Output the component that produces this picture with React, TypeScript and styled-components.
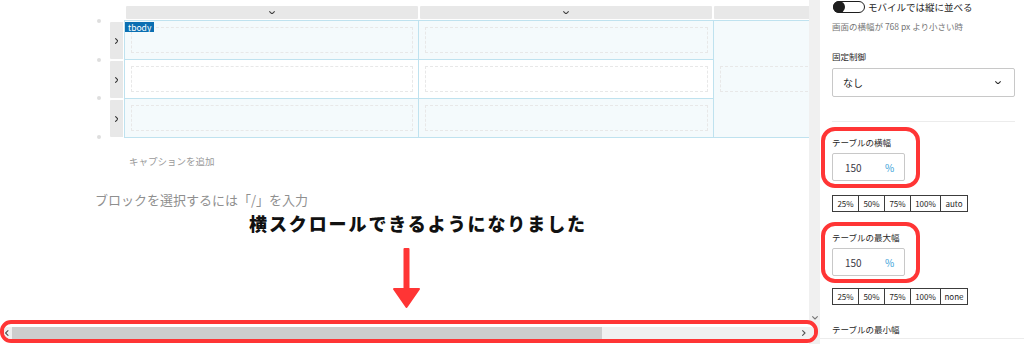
import React from 'react'
import styled, { createGlobalStyle } from 'styled-components'

const GlobalStyle = createGlobalStyle`
  html, body {
    margin: 0;
    padding: 0;
    background: #fff;
  }
  body {
    width: 1024px;
    height: 344px;
    overflow: hidden;
    font-family: "Noto Sans CJK JP", "Noto Sans", sans-serif;
    color: #1e1e1e;
  }
`

const Page = styled.div`
  display: flex;
  width: 1024px;
  height: 344px;
  overflow: hidden;
`

// 左側: エディタ + スクロールバー
const Main = styled.div`
  flex: none;
  width: 820px;
  display: grid;
  grid-template-columns: 809px 11px;
  grid-template-rows: 320px 24px;
`

const Editor = styled.div`
  grid-column: 1;
  grid-row: 1;
  overflow: hidden;
  padding-top: 6px;
  display: flex;
  flex-direction: column;
`

const VScroll = styled.div`
  grid-column: 2;
  grid-row: 1 / span 2;
  background: #f0f0f0;
  display: flex;
  flex-direction: column;
  justify-content: flex-end;
  align-items: center;
  padding-bottom: 24px;
`

const TableBlock = styled.div`
  display: flex;
  align-items: flex-start;
  padding-left: 97px;
`

const DotColumn = styled.div`
  width: 4px;
  height: 120px;
  margin-top: 13px;
  display: flex;
  flex-direction: column;
  justify-content: space-between;
  align-items: center;
`

const Dot = styled.span`
  width: 4px;
  height: 4px;
  border-radius: 50%;
  background: #dedede;
`

const TableWrap = styled.div`
  margin-left: 9px;
  display: flex;
  flex-direction: column;
  gap: 1px;
`

const HeaderRow = styled.div`
  display: flex;
  gap: 2px;
  height: 13px;
  padding-left: 16px;
`

const HeaderBar = styled.div<{ $w: number }>`
  flex: none;
  width: ${p => p.$w}px;
  background: #e8e8e8;
  border-radius: 1px;
  display: flex;
  align-items: center;
  justify-content: center;
`

const BodyRow = styled.div`
  display: flex;
  gap: 1px;
  align-items: flex-start;
`

const HandleColumn = styled.div`
  width: 13px;
  flex: none;
  display: flex;
  flex-direction: column;
  gap: 2px;
  padding-top: 2px;
`

const Handle = styled.div`
  height: 37px;
  background: #e8e8e8;
  border-radius: 1px 0 0 1px;
  display: flex;
  align-items: center;
  justify-content: center;
`

const Grid = styled.div`
  position: relative;
  flex: none;
  display: grid;
  grid-template-columns: 294px 295px 300px;
  grid-template-rows: repeat(3, 39px);
  border-top: 1px solid #bfe2ef;
  border-left: 1px solid #bfe2ef;
`

const Cell = styled.div<{ $fill?: boolean }>`
  box-sizing: border-box;
  border-right: 1px solid #bfe2ef;
  border-bottom: 1px solid #bfe2ef;
  background: ${p => (p.$fill ? '#f4fafc' : '#fff')};
  display: flex;
  align-items: center;
  padding: 0 5px 0 6px;
`

const MergedCell = styled(Cell)`
  grid-column: 3;
  grid-row: 1 / span 3;
`

const Field = styled.div`
  flex: 1;
  height: 26px;
  box-sizing: border-box;
  border: 1px dashed #e8e8e8;
`

const Badge = styled.span`
  position: absolute;
  top: 1px;
  left: 0;
  height: 10px;
  padding: 0 3px;
  background: #0a6fb2;
  color: #fff;
  font-size: 8.5px;
  line-height: 10px;
`

const Caption = styled.div`
  margin-top: 15px;
  padding-left: 129px;
  font-size: 9.5px;
  line-height: 14px;
  color: #9a9a9a;
`

const Placeholder = styled.div`
  margin-top: 23px;
  padding-left: 95px;
  font-size: 13px;
  line-height: 18px;
  color: #8f8f8f;
`

const Notice = styled.div`
  margin-top: 3px;
  padding-left: 249px;
  font-size: 18px;
  line-height: 22px;
  font-weight: 900;
  letter-spacing: 1.9px;
  color: #111;
`

const ArrowBox = styled.div`
  margin-top: 14px;
  padding-left: 392px;
  line-height: 0;
`

const ScrollHighlight = styled.div`
  grid-column: 1 / span 2;
  grid-row: 2;
  margin-right: 2px;
  height: 23px;
  box-sizing: border-box;
  border: 4px solid #ff3535;
  border-radius: 11px;
  background: #fff;
  padding-top: 3px;
  overflow: hidden;
`

const HScrollbar = styled.div`
  display: flex;
  align-items: center;
  height: 12px;
  background: #f0f0f0;
`

const ScrollArrow = styled.div<{ $w: number; $right?: boolean }>`
  flex: none;
  width: ${p => p.$w}px;
  height: 12px;
  display: flex;
  align-items: center;
  padding-left: ${p => (p.$right ? 4 : 1)}px;
  box-sizing: border-box;
`

const Thumb = styled.div`
  flex: none;
  width: 590px;
  height: 12px;
  background: #cdcdcd;
`

const Track = styled.div`
  flex: 1;
`

// 右側: 設定パネル
const Sidebar = styled.aside`
  flex: none;
  width: 204px;
  box-sizing: border-box;
  padding: 1px 9px 0 12px;
  display: flex;
  flex-direction: column;
  background: #fff;
`

const ToggleRow = styled.div`
  display: flex;
  align-items: center;
  height: 12px;
`

const Toggle = styled.div`
  width: 32px;
  height: 12px;
  margin-left: 1px;
  box-sizing: border-box;
  border: 1px solid #1e1e1e;
  border-radius: 6px;
  display: flex;
  align-items: center;
`

const Knob = styled.span`
  width: 12px;
  height: 12px;
  margin-left: -1px;
  border-radius: 50%;
  background: #1e1e1e;
`

const ToggleLabel = styled.span`
  margin-left: 3px;
  font-size: 9.5px;
  line-height: 12px;
`

const Help = styled.div`
  margin-top: 7px;
  font-size: 8.5px;
  line-height: 12px;
  color: #757575;
`

const Label = styled.div<{ $top?: number }>`
  margin-top: ${p => p.$top ?? 0}px;
  font-size: 8.5px;
  line-height: 12px;
  font-weight: 400;
  color: #1e1e1e;
`

const Select = styled.div`
  margin-top: 6px;
  height: 29px;
  box-sizing: border-box;
  border: 1px solid #c8c8c8;
  border-radius: 2px;
  display: flex;
  align-items: center;
  justify-content: space-between;
  padding: 0 13px 0 10px;
  font-size: 10px;
`

const Divider = styled.div<{ $top: number; $full?: boolean }>`
  margin-top: ${p => p.$top}px;
  height: 1px;
  background: #ececec;
  margin-left: ${p => (p.$full ? -12 : 0)}px;
  margin-right: ${p => (p.$full ? -9 : 0)}px;
`

const Highlight = styled.div<{ $top: number }>`
  margin-top: ${p => p.$top}px;
  margin-left: -11px;
  width: 99px;
  box-sizing: border-box;
  border: 4px solid #ff3535;
  border-radius: 14px;
  padding: 5px 0 3px 7px;
`

const UnitInput = styled.div`
  margin-top: 5px;
  width: 73px;
  height: 28px;
  box-sizing: border-box;
  border: 1px solid #c8c8c8;
  border-radius: 2px;
  display: flex;
  align-items: center;
  padding-left: 12px;
  font-size: 10px;
`

const NumberText = styled.span`
  width: 40px;
  color: #3c3a46;
`

const Unit = styled.span`
  color: #3a9fd8;
`

const Presets = styled.div<{ $top: number }>`
  display: flex;
  margin-top: ${p => p.$top}px;
`

const Preset = styled.button<{ $w: number }>`
  width: ${p => p.$w}px;
  height: 17px;
  margin: 0 0 0 -1px;
  padding: 0;
  border: 1px solid #3c3c3c;
  background: #fff;
  font-family: "Noto Sans CJK JP", "Noto Sans", sans-serif;
  font-size: 8px;
  line-height: 15px;
  color: #1e1e1e;
  &:first-child {
    margin-left: 0;
  }
`

const ChevronDown = ({ w = 6, color = '#444' }: { w?: number; color?: string }) => (
  <svg width={w} height={w * 0.6} viewBox="0 0 10 6" fill="none">
    <path d="M1 1l4 4 4-4" stroke={color} strokeWidth="1.8" strokeLinecap="round" strokeLinejoin="round" />
  </svg>
)

const ChevronRight = ({ h = 6, color = '#444' }: { h?: number; color?: string }) => (
  <svg width={h * 0.6} height={h} viewBox="0 0 6 10" fill="none">
    <path d="M1 1l4 4-4 4" stroke={color} strokeWidth="1.8" strokeLinecap="round" strokeLinejoin="round" />
  </svg>
)

const ChevronLeft = ({ h = 6, color = '#444' }: { h?: number; color?: string }) => (
  <svg width={h * 0.6} height={h} viewBox="0 0 6 10" fill="none">
    <path d="M5 1L1 5l4 4" stroke={color} strokeWidth="1.8" strokeLinecap="round" strokeLinejoin="round" />
  </svg>
)

const DownArrow = () => (
  <svg width="30" height="61" viewBox="0 0 30 61">
    <rect x="11.5" y="0" width="6" height="44" rx="1" fill="#ff3535" />
    <path d="M2 41h25L14.5 59z" fill="#ff3535" stroke="#ff3535" strokeWidth="2" strokeLinejoin="round" />
  </svg>
)

const rows = [true, false, true]
const widthPresets = ['25%', '50%', '75%', '100%']
const presetWidths = [27, 27, 27, 31]

const SizeField = ({ label, top }: { label: string; top: number }) => (
  <Highlight $top={top}>
    <Label>{label}</Label>
    <UnitInput>
      <NumberText>150</NumberText>
      <Unit>%</Unit>
    </UnitInput>
  </Highlight>
)

const PresetRow = ({ last, top }: { last: string; top: number }) => (
  <Presets $top={top}>
    {widthPresets.map((t, i) => (
      <Preset key={t} $w={presetWidths[i]}>{t}</Preset>
    ))}
    <Preset $w={28}>{last}</Preset>
  </Presets>
)

export default function App() {
  return (
    <>
      <GlobalStyle />
      <Page>
        <Main>
          <Editor>
            <TableBlock>
              <DotColumn>
                <Dot />
                <Dot />
                <Dot />
                <Dot />
              </DotColumn>
              <TableWrap>
                <HeaderRow>
                  <HeaderBar $w={292}><ChevronDown /></HeaderBar>
                  <HeaderBar $w={292}><ChevronDown /></HeaderBar>
                  <HeaderBar $w={292} />
                </HeaderRow>
                <BodyRow>
                  <HandleColumn>
                    {rows.map((_, i) => (
                      <Handle key={i}><ChevronRight h={6} color="#333" /></Handle>
                    ))}
                  </HandleColumn>
                  <Grid>
                    {rows.map((fill, i) => (
                      <React.Fragment key={i}>
                        <Cell $fill={fill}><Field /></Cell>
                        <Cell $fill={fill}><Field /></Cell>
                      </React.Fragment>
                    ))}
                    <MergedCell $fill><Field /></MergedCell>
                    <Badge>tbody</Badge>
                  </Grid>
                </BodyRow>
              </TableWrap>
            </TableBlock>
            <Caption>キャプションを追加</Caption>
            <Placeholder>ブロックを選択するには「/」を入力</Placeholder>
            <Notice>横スクロールできるようになりました</Notice>
            <ArrowBox><DownArrow /></ArrowBox>
          </Editor>
          <VScroll><ChevronDown w={6} color="#777" /></VScroll>
          <ScrollHighlight>
            <HScrollbar>
              <ScrollArrow $w={8}><ChevronLeft h={6} color="#555" /></ScrollArrow>
              <Thumb />
              <Track />
              <ScrollArrow $w={16} $right><ChevronRight h={6} color="#555" /></ScrollArrow>
            </HScrollbar>
          </ScrollHighlight>
        </Main>
        <Sidebar>
          <ToggleRow>
            <Toggle><Knob /></Toggle>
            <ToggleLabel>モバイルでは縦に並べる</ToggleLabel>
          </ToggleRow>
          <Help>画面の横幅が 768 px より小さい時</Help>
          <Label $top={18}>固定制御</Label>
          <Select>
            <span>なし</span>
            <ChevronDown w={6} color="#333" />
          </Select>
          <Divider $top={24} />
          <SizeField label="テーブルの横幅" top={5} />
          <PresetRow last="auto" top={7} />
          <SizeField label="テーブルの最大幅" top={10} />
          <PresetRow last="none" top={5} />
          <Label $top={18}>テーブルの最小幅</Label>
          <Divider $top={3} $full />
        </Sidebar>
      </Page>
    </>
  )
}
